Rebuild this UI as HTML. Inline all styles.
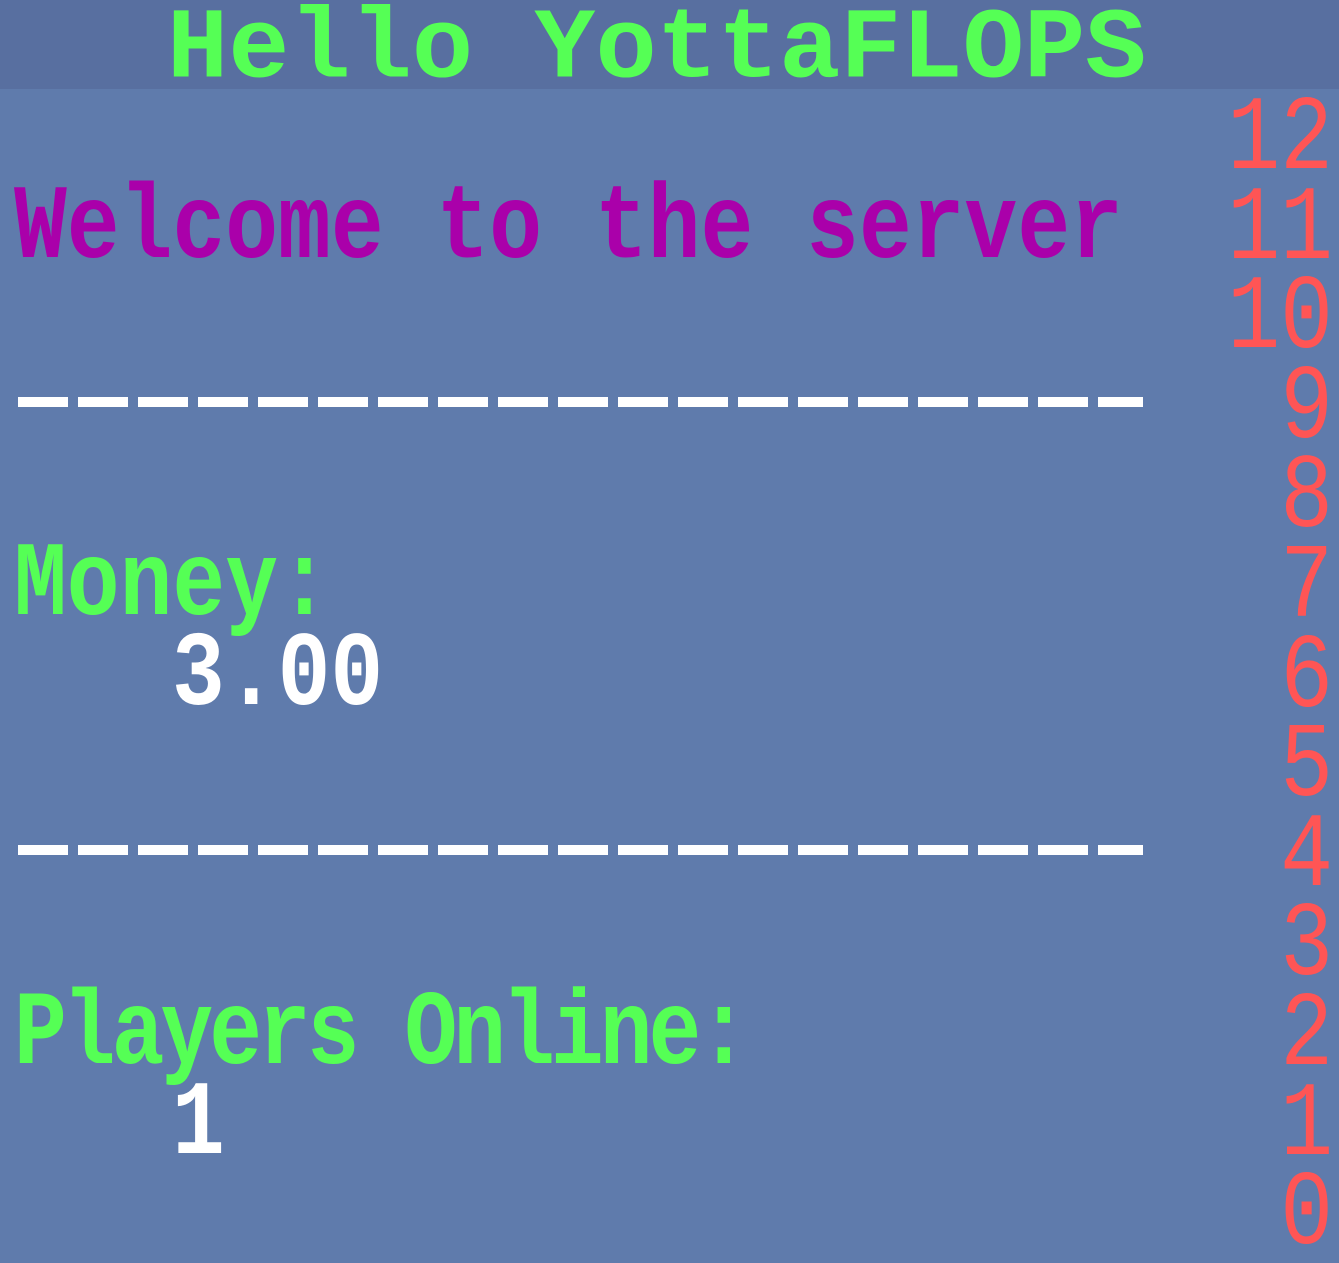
<!DOCTYPE html>
<html><head><meta charset="utf-8"><style>
html,body{margin:0;padding:0}
html{overflow:hidden}
body{width:1339px;height:1263px;background:#5f7bac;position:relative;overflow:hidden;font-family:"Liberation Mono",monospace}
.hdr{position:absolute;left:0;top:0;width:1339px;height:89px;background:#586fa0}
.t{position:absolute;white-space:pre;font-size:88px;line-height:88px;transform-origin:0 0;transform:scaleY(1.2);font-weight:bold}
.n{position:absolute;right:6px;white-space:pre;font-size:88px;line-height:88px;transform-origin:100% 0;transform:scaleY(1.2);color:#ff5555;text-align:right}
.dash{position:absolute;left:18px;width:1125px;height:10px;background:repeating-linear-gradient(90deg,#fff 0 50px,transparent 50px 60px);color:transparent;font-size:10px;line-height:10px;overflow:hidden}
</style></head><body>
<div class="hdr"></div>
<div class="t" style="left:167px;top:0px;font-size:102px;line-height:102px;transform:scaleY(0.98);color:#55ff55">Hello YottaFLOPS</div>
<div class="t" style="left:14px;top:178px;color:#aa00aa">Welcome to the server</div>
<div class="dash" style="top:397px">-------------------</div>
<div class="t" style="left:14px;top:535px;color:#55ff55">Money:</div>
<div class="t" style="left:172px;top:625px;color:#fff">3.00</div>
<div class="dash" style="top:845px">-------------------</div>
<div class="t" style="left:14px;top:984px;color:#55ff55;letter-spacing:-4px">Players Online:</div>
<div class="t" style="left:172px;top:1074px;color:#fff">1</div>
<div class="n" style="top:89px">12</div>
<div class="n" style="top:179px">11</div>
<div class="n" style="top:268px">10</div>
<div class="n" style="top:358px">9</div>
<div class="n" style="top:447px">8</div>
<div class="n" style="top:537px">7</div>
<div class="n" style="top:627px">6</div>
<div class="n" style="top:716px">5</div>
<div class="n" style="top:806px">4</div>
<div class="n" style="top:895px">3</div>
<div class="n" style="top:985px">2</div>
<div class="n" style="top:1075px">1</div>
<div class="n" style="top:1164px">0</div>
</body></html>
